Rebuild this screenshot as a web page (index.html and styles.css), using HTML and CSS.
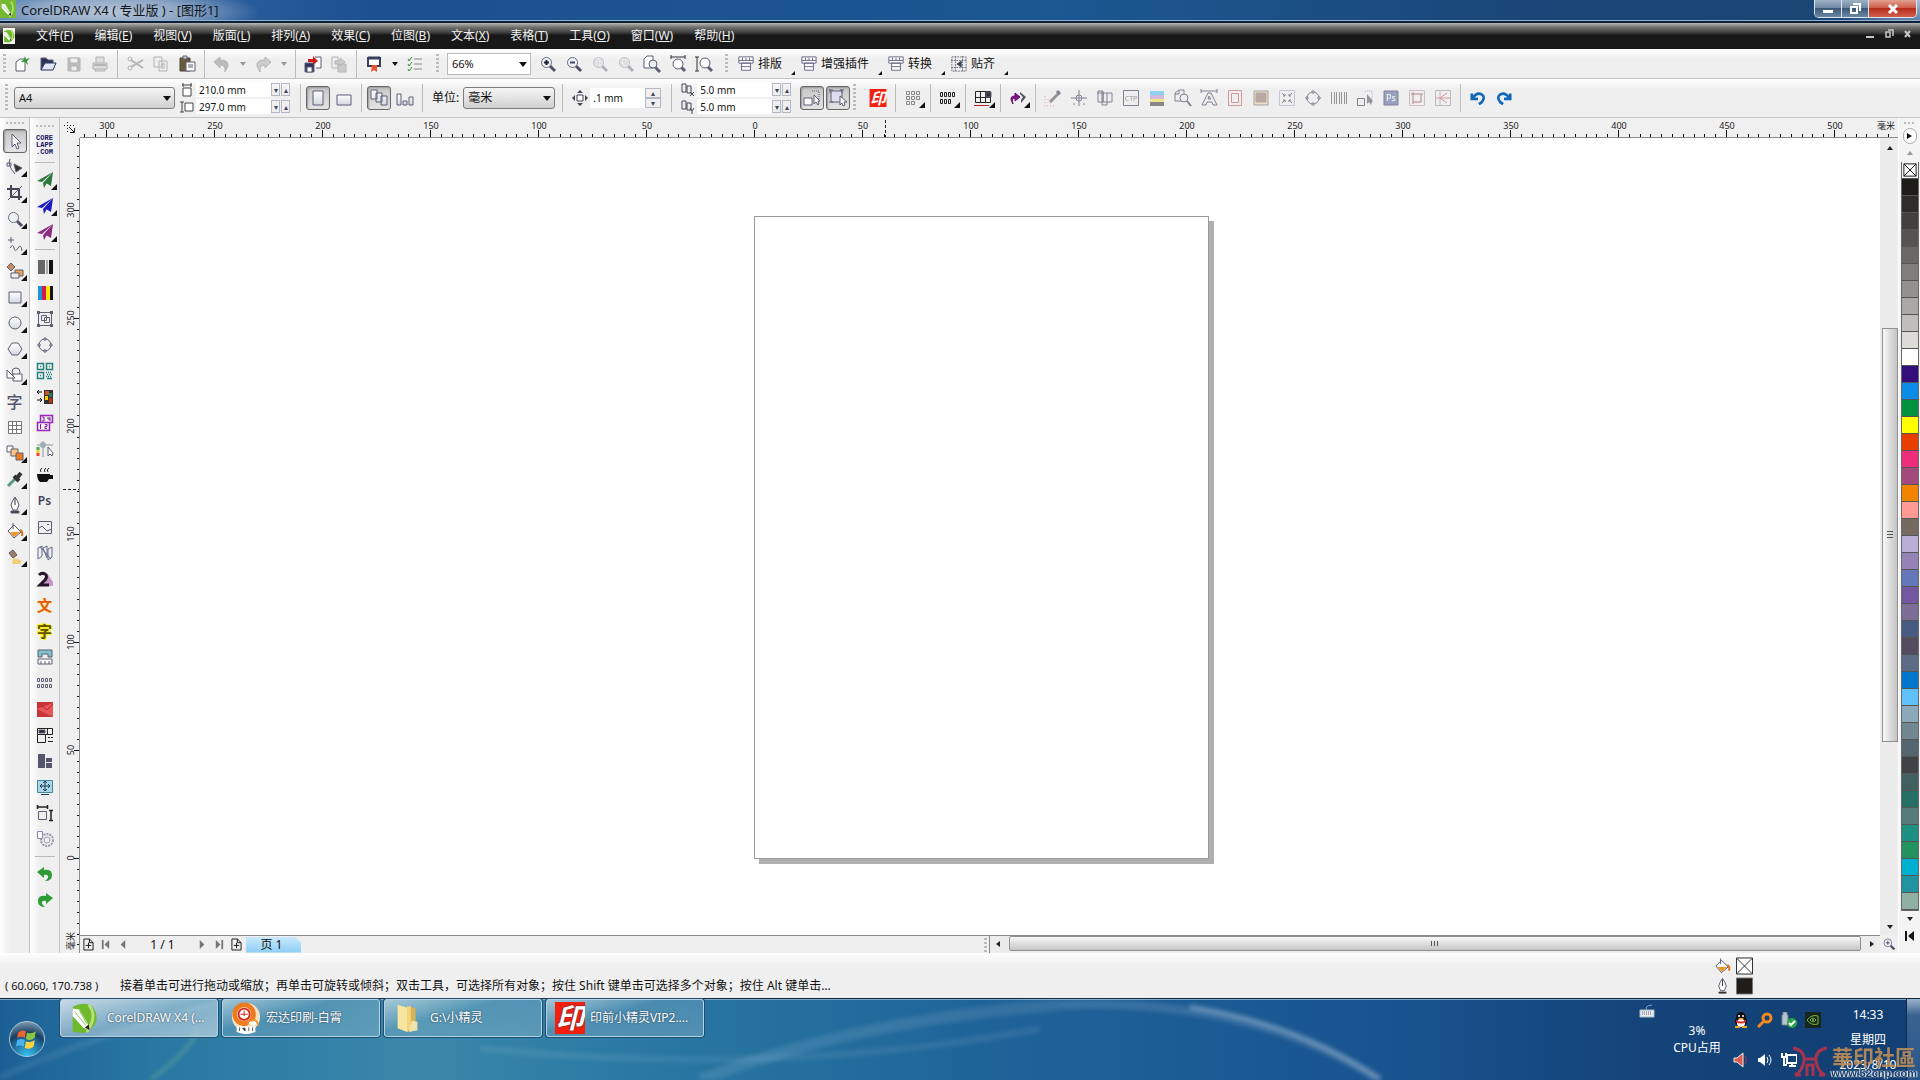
FILE: index.html
```html
<!DOCTYPE html>
<html lang="zh-CN">
<head>
<meta charset="utf-8">
<title>CorelDRAW X4</title>
<link rel="stylesheet" href="styles.css">
</head>
<body>
<svg class="defs" aria-hidden="true">
  <defs>
    <linearGradient id="face" x1="0" y1="0" x2="0" y2="1"><stop offset="0" stop-color="#fff"/><stop offset="1" stop-color="#d5d8e2"/></linearGradient>
    <pattern id="hticks" patternUnits="userSpaceOnUse" x="26" y="0" width="108" height="20"><path d="M.5 12v7M11.5 16v3M22.5 16v3M32.5 16v3M43.5 16v3M54.5 16v3M65.5 16v3M76.5 16v3M86.5 16v3M97.5 16v3" stroke="#111"/></pattern>
    <pattern id="vticks" patternUnits="userSpaceOnUse" x="0" y="72" width="20" height="108"><path d="M14 .5h6M17 11.5h2M17 22.5h2M17 32.5h2M17 43.5h2M17 54.5h2M17 65.5h2M17 76.5h2M17 86.5h2M17 97.5h2" stroke="#111"/></pattern>
  </defs>
  <symbol id="corel" viewBox="0 0 30 34"><path d="M3 5Q14-1 23 4q7 8 5 17-4 9-13 12L3 32z" fill="#6fb92c" stroke="none"/><path d="M20 3q10 12-2 29" fill="none" stroke="#b9e07d" stroke-width="3"/><path d="M3 7l7 1 9 15 2 7-7-3L3 15z" fill="#fff"/><path d="M5 10l12 15M10 9l8 14" stroke="#89bd57"/><path d="M16 27l5 3-1-6z" fill="#222"/></symbol>
  <symbol id="lens" viewBox="0 0 18 18"><path d="M11 11l5 5" stroke="#52536a" stroke-width="3"/><circle cx="7.500" cy="7.500" r="5" fill="#eef1f8" stroke="#6a6c80"/></symbol>
  <symbol id="plane" viewBox="0 0 18 18"><path d="M17 1L1 10l5 1zM17 1L7 12l1 5zM17 1l-7 11 5 3z" stroke="none"/></symbol>
  <symbol id="panel" viewBox="0 0 18 18"><path d="M1 1h16v7H1zM4 8h10v8H4zM4 12h10M1 5h16M5 2v3M9 2v3M13 2v3" fill="#fff" stroke="#5d5d80"/></symbol>
  <symbol id="seal" viewBox="0 0 30 32"><path d="M0 0h30v32H0z" fill="#f3200f" stroke="none"/><text x="15" y="26" text-anchor="middle" class="sealmark">印</text></symbol>
  <symbol id="bucket" viewBox="0 0 18 18"><path d="M2 9l6-6 7 7-7 6z" fill="#fff" stroke="#555670"/><path d="M4 10h10l-6 5z" fill="#f09426" stroke="none"/><path d="M7 1v6" stroke="#555670"/><path d="M14 8q3 1 2 6" fill="none" stroke="#d67418" stroke-width="2"/></symbol>
  <symbol id="nib" viewBox="0 0 18 18"><path d="M9 1Q6 5 5 9l2 5h4l2-5Q12 5 9 1z" fill="#fff" stroke="#55566a"/><path d="M9 2v7M5 16h8" stroke="#333"/><path d="M5 15h8v2H5z" fill="#333"/></symbol>
  <symbol id="addpage" viewBox="0 0 12 14"><path d="M1 1h6l4 4v8H1zM6 5v6M3 8h6M7 1v4h4" fill="none" stroke="#111"/></symbol>
  <symbol id="curl" viewBox="0 0 18 18"><path d="M1 7l7-5v3q8-1 8 5t-7 6q4-3 3-5t-4-1v3z" stroke="none"/></symbol>
  <symbol id="turn" viewBox="0 0 18 18"><path d="M2 4v6h7M3 9q5-7 10-4t0 9l-3 2" fill="none" stroke-width="3"/></symbol>
</svg>

<header class="titlebar">
  <svg class="logo"><use href="#corel"/></svg>
  <h1>CorelDRAW X4 ( 专业版 ) - [图形1]</h1>
  <div class="wincontrols">
    <button aria-label="最小化"><svg viewBox="0 0 14 12"><path d="M2 7h10v3H2z" fill="#fff"/></svg></button>
    <button aria-label="还原"><svg viewBox="0 0 14 12"><path d="M5 1h7v7M3 4h6v6H3z" fill="none" stroke="#fff" stroke-width="2"/></svg></button>
    <button class="close" aria-label="关闭"><svg viewBox="0 0 14 12"><path d="M3 2l8 8M11 2l-8 8" stroke="#fff" stroke-width="3"/></svg></button>
  </div>
</header>

<nav class="menubar">
  <svg class="docicon"><use href="#corel"/></svg>
  <button>文件(<u>F</u>)</button><button>编辑(<u>E</u>)</button><button>视图(<u>V</u>)</button><button>版面(<u>L</u>)</button><button>排列(<u>A</u>)</button><button>效果(<u>C</u>)</button><button>位图(<u>B</u>)</button><button>文本(<u>X</u>)</button><button>表格(<u>T</u>)</button><button>工具(<u>O</u>)</button><button>窗口(<u>W</u>)</button><button>帮助(<u>H</u>)</button>
  <svg class="doccontrols" viewBox="0 0 46 12"><path d="M0 8h8v2H0z" fill="#c8c8c8"/><path d="M22 2h5v6M20 4h4v5h-4z" fill="none" stroke="#c8c8c8" stroke-width="1.500"/><path d="M39 3l5 6M44 3l-5 6" stroke="#c8c8c8" stroke-width="2"/></svg>
</nav>

<div class="toolbar standard">
  <i class="grip"></i>
  <button class="tool" aria-label="新建"><svg viewBox="0 0 18 18"><path d="M3 7l4-3h5v12H3z" fill="#fff"/><path d="M12 1l1 3 4-1-3 3 1 4-3-3-4 0 3-3z" fill="#3a9a3a" stroke="none"/></svg></button>
  <button class="tool" aria-label="打开"><svg viewBox="0 0 18 18"><path d="M2 15V3h5l2 2h5v3H6z" fill="#2d3358"/><path d="M6 8h11l-3 7H2z" fill="#dfe6f5" stroke="#2d3358"/></svg></button>
  <button class="tool off" aria-label="保存"><svg viewBox="0 0 18 18"><path d="M3 3h12v13H3z" fill="#bbb"/><path d="M5 3h8v5H5zM6 11h6v5H6z" fill="#eee"/></svg></button>
  <button class="tool off" aria-label="打印"><svg viewBox="0 0 18 18"><path d="M5 8V2h8v6M2 8h14v6H2zM4 14v2h10v-2" fill="#ddd"/><path d="M3 10h12" stroke-width="2"/></svg></button>
  <i class="sep"></i>
  <button class="tool off" aria-label="剪切"><svg viewBox="0 0 18 18"><path d="M5 5l12 8M5 12l12-7" stroke-width="2"/><circle cx="4" cy="4" r="2"/><circle cx="4" cy="13" r="2"/></svg></button>
  <button class="tool off" aria-label="复制"><svg viewBox="0 0 18 18"><path d="M2 2h8v10H2zM7 6h8v10H7zM9 9h4M9 11h4M9 13h4" fill="#eee"/></svg></button>
  <button class="tool" aria-label="粘贴"><svg viewBox="0 0 18 18"><path d="M2 3h10v13H2z" fill="#6a5a3c" stroke="#4a4538"/><path d="M5 1h4v3H5z" fill="#ccc"/><path d="M8 7h9v9H8zM10 10h5M10 12h5" fill="#fff"/></svg></button>
  <i class="sep"></i>
  <button class="tool off" aria-label="撤消"><svg viewBox="0 0 18 18"><path d="M1 7l6-5v3q9 0 8 6l-3 6q1-7-5-7v3z" fill="#bbb"/></svg></button><button class="drop off" aria-label="撤消列表"></button>
  <button class="tool off" aria-label="重做"><svg viewBox="0 0 18 18"><path d="M17 7l-6-5v3q-9 0-8 6l3 6q-1-7 5-7v3z" fill="#ccc"/></svg></button><button class="drop off" aria-label="重做列表"></button>
  <i class="sep"></i>
  <button class="tool" aria-label="导入"><svg viewBox="0 0 18 18"><path d="M11 2h6v11h-5" fill="#fff"/><path d="M1 8h9v9H1z" fill="#2c3260"/><path d="M3 12h5v5H3z" fill="#fff"/><path d="M4 4h5V1l5 5-5 4V7H4z" fill="#d01c1c" stroke="none"/></svg></button>
  <button class="tool off" aria-label="导出"><svg viewBox="0 0 18 18"><path d="M2 2h6v11H2z" fill="#eee"/><path d="M8 9h8v8H8z" fill="#ccc"/><path d="M5 6h5V3l5 4-5 4V9H5z" fill="#ccc"/></svg></button>
  <i class="sep"></i>
  <button class="tool" aria-label="应用程序启动器"><svg viewBox="0 0 18 18"><path d="M3 3h12v8H3z" fill="#fff" stroke="#39405f" stroke-width="2"/><path d="M3 3h12" stroke="#39405f" stroke-width="3"/><path d="M7 10h5v7l-3-2-3 2z" fill="#e8542d" stroke="none"/></svg></button><button class="drop" aria-label="启动器列表"></button>
  <button class="tool" aria-label="选项"><svg viewBox="0 0 18 18"><path d="M8 4h8M8 9h8M8 14h8" stroke="#888"/><path d="M2 4l1 2 3-4M2 9l1 2 3-4M2 14l1 2 3-4" stroke="#3b8a3b"/></svg></button>
  <i class="grip late"></i>
  <span class="combo zoomlevel"><select aria-label="缩放级别"><option>66%</option></select></span>
  <button class="tool" aria-label="放大"><svg viewBox="0 0 18 18"><use href="#lens"/><path d="M5 7.500h5M7.500 5v5" stroke="#223" stroke-width="2"/></svg></button>
  <button class="tool" aria-label="缩小"><svg viewBox="0 0 18 18"><use href="#lens"/><path d="M5 7.500h5" stroke="#447" stroke-width="2"/></svg></button>
  <button class="tool off dim" aria-label="缩放选定"><svg viewBox="0 0 18 18"><use href="#lens"/><path d="M4 5h7v6H4zM4 8h7M7 4v7"/></svg></button>
  <button class="tool off dim" aria-label="缩放全部"><svg viewBox="0 0 18 18"><use href="#lens"/><path d="M4 6h5v4H4zM7 4h4v4H7z"/></svg></button>
  <button class="tool" aria-label="缩放页面"><svg viewBox="0 0 18 18"><path d="M1 4l3-3h6v12H1z" fill="#fff"/><path d="M12 12l5 5" stroke-width="3"/><circle cx="10" cy="9" r="4" fill="#e8ecf4"/></svg></button>
  <button class="tool" aria-label="按宽度"><svg viewBox="0 0 18 18"><path d="M2 2h14M2 0v4M16 0v4" stroke="#333"/><path d="M12 12l4 4" stroke-width="3"/><circle cx="9" cy="9" r="5" fill="#fff"/></svg></button>
  <button class="tool" aria-label="按高度"><svg viewBox="0 0 18 18"><path d="M2 2v14M0 2h4M0 16h4" stroke="#333"/><path d="M13 12l4 4" stroke-width="3"/><circle cx="10" cy="8" r="5" fill="#fff"/></svg></button>
  <i class="grip late"></i>
  <button class="texttool"><svg><use href="#panel"/></svg>排版</button>
  <button class="texttool"><svg><use href="#panel"/></svg>增强插件</button>
  <button class="texttool"><svg><use href="#panel"/></svg>转换</button>
  <button class="texttool"><svg viewBox="0 0 18 18"><path d="M1 1h16v16H1zM5 0v18M13 0v18M0 5h18M0 13h18" fill="none" stroke="#667" stroke-dasharray="2 1"/><path d="M12 5v8L6 9z" fill="#345"/></svg>贴齐</button>
</div>

<div class="toolbar property">
  <i class="grip"></i>
  <span class="combo raised paper"><select aria-label="纸张类型"><option>A4</option></select></span>
  <div class="pair">
    <label><svg viewBox="0 0 14 14"><path d="M3 5h8v8H3zM2 2h10M3 0v4M11 0v4" fill="#fff" stroke="#444"/></svg><input aria-label="宽度" value="210.0 mm"><span class="spin"><button aria-label="减小">▾</button><button aria-label="增大">▴</button></span></label>
    <label><svg viewBox="0 0 14 14"><path d="M5 3h8v8H5zM2 2v10M0 2h4M0 12h4" fill="#fff" stroke="#444"/></svg><input aria-label="高度" value="297.0 mm"><span class="spin"><button aria-label="减小">▾</button><button aria-label="增大">▴</button></span></label>
  </div>
  <i class="sep"></i>
  <button class="tool on" aria-label="纵向"><svg viewBox="0 0 18 18"><path d="M4 2h10v14H4z" fill="url(#face)"/></svg></button>
  <button class="tool" aria-label="横向"><svg viewBox="0 0 18 18"><path d="M2 6h14v10H2z" fill="url(#face)"/></svg></button>
  <i class="sep"></i>
  <button class="tool on" aria-label="全部页面"><svg viewBox="0 0 18 18"><path d="M1 1h6v9H1zM6 4h6v9H6zM11 7h6v9h-6z" fill="url(#face)"/></svg></button>
  <button class="tool" aria-label="当前页面"><svg viewBox="0 0 18 18"><path d="M1 5h4v11H1zM7 12h4v4H7zM13 8h4v8h-4z" fill="url(#face)"/></svg></button>
  <i class="sep"></i>
  <label class="units">单位: <span class="combo raised"><select><option>毫米</option></select></span></label>
  <i class="sep"></i>
  <label class="nudge"><svg viewBox="0 0 16 16"><path d="M5 5h6v6H5z" fill="#fff" stroke="#445"/><path d="M8 0l3 3H5zM8 16l3-3H5zM0 8l3-3v6zM16 8l-3-3v6z" fill="#445"/></svg><input aria-label="微调偏移" value=".1 mm"><span class="spin tall"><button aria-label="增大">▴</button><button aria-label="减小">▾</button></span></label>
  <i class="sep"></i>
  <div class="pair dup">
    <label><svg viewBox="0 0 14 14"><path d="M1 1h4v8H1zM6 3h4v7H6zM9 9l4 4M13 9l-4 4" fill="none" stroke="#445"/></svg><input aria-label="再制距离 X" value="5.0 mm"><span class="spin"><button aria-label="减小">▾</button><button aria-label="增大">▴</button></span></label>
    <label><svg viewBox="0 0 14 14"><path d="M1 1h4v8H1zM6 3h4v7H6zM9 8l2 3 2-3M11 11v3" fill="none" stroke="#445"/></svg><input aria-label="再制距离 Y" value="5.0 mm"><span class="spin"><button aria-label="减小">▾</button><button aria-label="增大">▴</button></span></label>
  </div>
  <button class="tool on" aria-label="移动时"><svg viewBox="0 0 18 18"><path d="M1 9h8v7H1z" fill="#fff"/><path d="M9 2h7v8" stroke-dasharray="1 1"/><path d="M11 6v9l2-2 2 3 1-1-1-3h2z" fill="#fff"/></svg></button>
  <button class="tool on" aria-label="视为已填充"><svg viewBox="0 0 18 18"><path d="M2 2h11v11H2zM0 1h4M11 1h4M0 13h4M1 0v4M13 0v4" fill="#dde"/><path d="M11 7v9l2-2 1 3 2-1-1-3h3z" fill="#fff"/></svg></button>
  <i class="grip"></i>
  <button class="tool wide" aria-label="印前小精灵"><svg><use href="#seal"/></svg></button>
  <i class="sep"></i>
  <button class="tool fly" aria-label="阵列"><svg viewBox="0 0 18 18"><path d="M2.500 2.500h3v3h-3zM7.500 2.500h3v3h-3zM12.500 2.500h3v3h-3zM2.500 7.500h3v3h-3zM7.500 7.500h3v3h-3zM12.500 7.500h3v3h-3zM2.500 12.500h3v3h-3zM7.500 12.500h3v3h-3z" stroke="#888"/></svg></button>
  <i class="sep"></i>
  <button class="tool fly" aria-label="拼版"><svg viewBox="0 0 18 18"><path d="M1.500 3.500h2v4h-2zM5.500 3.500h2v4h-2zM9.500 3.500h2v4h-2zM13.500 3.500h2v4h-2zM1.500 10.500h2v4h-2zM5.500 10.500h2v4h-2zM9.500 10.500h2v4h-2z" stroke="#222"/></svg></button>
  <i class="sep"></i>
  <button class="tool fly" aria-label="裁切"><svg viewBox="0 0 18 18"><path d="M1.500 2.500h15v11h-15zM1 8.500h16M6.500 2v12M11.500 2v12" stroke="#222"/><path d="M12 3h5v5h-5z" fill="#333"/><path d="M0 16.500h15" stroke="#b22"/></svg></button>
  <i class="sep"></i>
  <button class="tool fly" aria-label="转曲"><svg viewBox="0 0 18 18"><path d="M4 15Q-1 7 6 7V4l5 4-5 4V9q-4 0-2 6z" fill="#83138a" stroke="#600f67"/><path d="M11 3l6 5-5 6v-3l2-3-3-3z" fill="#554c66" stroke="none"/></svg></button>
  <i class="sep"></i>
  <div class="plugins">
  <button class="tool" aria-label="取色"><svg viewBox="0 0 18 18"><path d="M6 13L15 4" stroke="#777" stroke-width="3"/><path d="M13 2l3 3" stroke-width="3"/><path d="M1 7v10h10M4 10v4h4" stroke="#e88" stroke-dasharray="1 2"/></svg></button>
  <button class="tool" aria-label="定位"><svg viewBox="0 0 18 18"><path d="M9 1v16M1 9h16M3 15h2M13 15h2"/><circle cx="9" cy="9" r="3"/></svg></button>
  <button class="tool" aria-label="出血"><svg viewBox="0 0 18 18"><path d="M2 2h5v11H2zM7 4h9v9H7zM6 2v14h5V4M1 4h6"/></svg></button>
  <button class="tool" aria-label="CTP"><svg viewBox="0 0 18 18"><path d="M1.500 1.500h15v15h-15z"/><text x="9" y="12" text-anchor="middle">CTP</text></svg></button>
  <button class="tool" aria-label="色条"><svg viewBox="0 0 18 18"><g stroke="none"><path d="M2 2h14v4H2z" fill="#71c9ee"/><path d="M2 6h14v4H2z" fill="#c8a8dc"/><path d="M2 10h14v3H2z" fill="#ece26a"/><path d="M2 13h14v4H2z" fill="#666"/></g></svg></button>
  <button class="tool" aria-label="查找"><svg viewBox="0 0 18 18"><path d="M1 4l4-3h5v11H1zM5 1v4H1"/><circle cx="10" cy="9" r="4" fill="#eee"/><path d="M13 12l4 5" stroke-width="2"/></svg></button>
  <button class="tool" aria-label="文字"><svg viewBox="0 0 18 18"><path d="M2 16L8 4h3l6 12h-4l-1-3H7l-1 3zM8 10h3L9 7zM1 2h16M1 0v4M17 0v4"/></svg></button>
  <button class="tool" aria-label="边框"><svg viewBox="0 0 18 18"><path d="M2.500 1.500h13v15h-13zM5.500 4.500h7v9h-7z" stroke="#c67b7b"/></svg></button>
  <button class="tool" aria-label="填色"><svg viewBox="0 0 18 18"><path d="M2 2h14v14H2z" fill="#f6d8b9" stroke="#888"/><path d="M4 4h10v9H4z" fill="#a88f8b" stroke="#998"/></svg></button>
  <button class="tool" aria-label="缩小至"><svg viewBox="0 0 18 18"><path d="M1.500 1.500h15v15h-15z" stroke="#b7b9d0"/><path d="M4 4l3 3M14 4l-3 3M4 14l3-3M14 14l-3-3M7 5v2H5M11 5v2h2M7 13v-2H5M11 13v-2h2"/></svg></button>
  <button class="tool" aria-label="圆形节点"><svg viewBox="0 0 18 18"><circle cx="9" cy="9" r="6"/><path d="M8 2h2v2H8zM8 14h2v2H8zM2 8h2v2H2zM14 8h2v2h-2z" fill="#eee"/></svg></button>
  <button class="tool" aria-label="条码"><svg viewBox="0 0 18 18"><path d="M1.500 3v12M4.500 3v12M6.500 3v12M9.500 3v12M11.500 3v12M14.500 3v12M16.500 3v12" stroke="#777"/></svg></button>
  <button class="tool" aria-label="选取"><svg viewBox="0 0 18 18"><path d="M1.500 9.500h7v7h-7z"/><path d="M9 2h7v8" stroke="#8ba5d6" stroke-dasharray="1 1"/><path d="M11 5v10l2-2 2 3 1-3 1-1z" fill="#777" stroke="none"/></svg></button>
  <button class="tool" aria-label="Photoshop"><svg viewBox="0 0 18 18"><path d="M2 2h14v14H2z" fill="#7d87af"/><text class="light" x="9" y="12" text-anchor="middle">Ps</text></svg></button>
  <button class="tool" aria-label="裁切框"><svg viewBox="0 0 18 18"><path d="M1.500 1.500h15v15h-15z" stroke="#c5acba"/><path d="M5 5h8v8H5zM3 5h2M13 5h2M5 3v2M5 13v2" stroke="#a85f68"/></svg></button>
  <button class="tool" aria-label="角线"><svg viewBox="0 0 18 18"><path d="M1.500 1.500h15v15h-15zM6 1v16" stroke="#aaa"/><path d="M2 9h14M6 9l7 5M6 9l7-5" stroke="#d87780"/></svg></button>
  </div>
  <i class="sep"></i>
  <button class="tool blue" aria-label="撤消"><svg><use href="#turn"/></svg></button>
  <button class="tool blue flip" aria-label="重做"><svg><use href="#turn"/></svg></button>
</div>

<main class="workspace">
  <aside class="toolbox first">
    <i class="vgrip"></i>
    <button class="tool on" aria-label="挑选"><svg viewBox="0 0 18 18"><path d="M6 2v13l3-3 2 5 2-1-2-5h4z" fill="#fff"/></svg></button>
    <button class="tool fly" aria-label="形状"><svg viewBox="0 0 18 18"><path d="M4 1q-3 6 5 15M1 5h4v3H1z"/><path d="M8 6l8 4-6 4z" fill="#333"/></svg></button>
    <button class="tool fly" aria-label="裁剪"><svg viewBox="0 0 18 18"><path d="M5 1v12h11M1 5h12v11" stroke="#445" stroke-width="2"/><path d="M2 16L16 2"/></svg></button>
    <button class="tool fly" aria-label="缩放"><svg viewBox="0 0 18 18"><use href="#lens"/></svg></button>
    <button class="tool fly" aria-label="手绘"><svg viewBox="0 0 18 18"><path d="M5 1v6M2 4h6M4 12q3-5 4 0t4 0 4 3"/></svg></button>
    <button class="tool fly" aria-label="智能填充"><svg viewBox="0 0 18 18"><path d="M1 5l4-4 4 4-4 4z" fill="#c98d65"/><path d="M9 8h8v6H9z" fill="#eaa74f"/><path d="M5 11h8v5H5z" fill="#eee"/></svg></button>
    <button class="tool fly" aria-label="矩形"><svg viewBox="0 0 18 18"><path d="M3 4h12v11H3z" fill="url(#face)"/></svg></button>
    <button class="tool fly" aria-label="椭圆形"><svg viewBox="0 0 18 18"><circle cx="9" cy="9" r="6" fill="url(#face)"/></svg></button>
    <button class="tool fly" aria-label="多边形"><svg viewBox="0 0 18 18"><path d="M6 3h6l4 6-4 6H6L2 9z" fill="url(#face)"/></svg></button>
    <button class="tool fly" aria-label="基本形状"><svg viewBox="0 0 18 18"><circle cx="10" cy="6" r="4"/><path d="M7 8h9v7H7z" fill="#fff"/><path d="M1 4v8h8z" fill="#fff"/></svg></button>
    <button class="tool glyph" aria-label="文本">字</button>
    <button class="tool" aria-label="表格"><svg viewBox="0 0 18 18"><path d="M2.500 3.500h13v12h-13zM2 7.500h14M2 11.500h14M6.500 3v12M10.500 3v12" fill="#fff" stroke="#777"/></svg></button>
    <button class="tool fly" aria-label="交互式调和"><svg viewBox="0 0 18 18"><path d="M1 2h6v6H1z" fill="#fff"/><path d="M5 5h7v7H5z" fill="#f9c982"/><path d="M10 9h7v7h-7z" fill="#ef7c22"/></svg></button>
    <button class="tool fly" aria-label="滴管"><svg viewBox="0 0 18 18"><path d="M2 16L11 7" stroke="#5a9a81" stroke-width="3"/><path d="M8 6l5 5M11 8l4-5" stroke="#333" stroke-width="4"/></svg></button>
    <button class="tool fly" aria-label="轮廓"><svg><use href="#nib"/></svg></button>
    <button class="tool fly" aria-label="填充"><svg><use href="#bucket"/></svg></button>
    <button class="tool fly" aria-label="交互式填充"><svg viewBox="0 0 18 18"><path d="M3 5l4-3 4 5-4 3z" fill="#99816e" stroke="#655"/><path d="M7 10l8 2v4H6z" fill="#f4cd79" stroke="none"/></svg></button>
  </aside>
  <aside class="toolbox second">
    <i class="vgrip"></i>
    <a class="brand" href="#">CORE<br>LAPP<br>.COM</a>
    <i class="hsep"></i>
    <button class="tool fly green" aria-label="发送一"><svg><use href="#plane"/></svg></button>
    <button class="tool fly navy" aria-label="发送二"><svg><use href="#plane"/></svg></button>
    <button class="tool fly plum" aria-label="发送三"><svg><use href="#plane"/></svg></button>
    <i class="hsep"></i>
    <button class="tool" aria-label="灰度"><svg viewBox="0 0 18 18"><g stroke="none"><path d="M2 2h7v14H2z" fill="#666"/><path d="M10 2h2v14h-2z" fill="#aaa"/><path d="M13 2h4v14h-4z" fill="#111"/></g></svg></button>
    <button class="tool" aria-label="四色"><svg viewBox="0 0 18 18"><g stroke="none"><path d="M2 2h4v14H2z" fill="#1b96d1"/><path d="M6 2h4v14H6z" fill="#d51757"/><path d="M10 2h4v14h-4z" fill="#fce800"/><path d="M14 2h3v14h-3z" fill="#151515"/></g></svg></button>
    <button class="tool" aria-label="群组"><svg viewBox="0 0 18 18"><path d="M2.500 2.500h13v13h-13zM5.500 5.500h5v5h-5zM8.500 7.500h5v5h-5z"/><path d="M1 1h3v3H1zM14 1h3v3h-3zM1 14h3v3H1zM14 14h3v3h-3z" fill="#5c5e74" stroke="none"/></svg></button>
    <button class="tool" aria-label="节点"><svg viewBox="0 0 18 18"><circle cx="9" cy="9" r="6"/><path d="M8 2h2v2H8zM8 14h2v2H8zM2 8h2v2H2zM14 8h2v2h-2z" fill="#fff"/></svg></button>
    <button class="tool" aria-label="二维码"><svg viewBox="0 0 18 18"><path d="M1.500 1.500h6v6h-6zM10.500 1.500h6v6h-6zM1.500 10.500h6v6h-6zM4 4.500h1M13 4.500h1M4 13.500h1M10 10.500h1M12 10.500h1M14 10.500h1M11 12.500h1M13 12.500h1M15 12.500h1M10 14.500h1M12 14.500h1M14 14.500h1M11 16.500h5" stroke="#23817d" stroke-width="1.500"/></svg></button>
    <button class="tool" aria-label="颜色替换"><svg viewBox="0 0 18 18"><g stroke="none"><path d="M8 2h9v14H8z" fill="#333"/><path d="M9 3h4v4H9z" fill="#c52"/><path d="M9 8h3v4H9z" fill="#fc0"/><path d="M13 5h3v4h-3z" fill="#276"/><path d="M13 10h3v5h-3z" fill="#b31"/></g><path d="M6 4H1l2-2M1 4l2 2M1 12h5l-2-2M6 12l-2 2" stroke="#111"/></svg></button>
    <button class="tool" aria-label="编号"><svg viewBox="0 0 18 18"><path d="M4.500 1.500h12v7h-12zM1.500 8.500h12v8h-12z" stroke="#9824bb" stroke-width="1.500"/><path d="M6 3h2v4H6M12 3v2h2M14 3v4M4.500 10v5M9 10.500h2v2H9v2h2" stroke="#82189f"/></svg></button>
    <button class="tool" aria-label="对齐"><svg viewBox="0 0 18 18"><path d="M7 1v16M1 5h16M5 3h4v4H5z" stroke="#8996a0"/><path d="M2 7v3" stroke="#4a4" stroke-width="3"/><path d="M2 10v3" stroke="#fc2" stroke-width="3"/><path d="M2 13v3" stroke="#e43" stroke-width="3"/><path d="M12 7v9l2-2 2 2 1-3z" fill="#fff"/></svg></button>
    <button class="tool" aria-label="休息"><svg viewBox="0 0 18 18"><path d="M1 8h13v1h3v4h-4l-2 3H4q-3-3-3-8z" fill="#111" stroke="none"/><path d="M5 6q-2-2 1-4M9 6q-2-2 1-4M12 6q-2-2 1-4" stroke="#222"/></svg></button>
    <button class="tool ps" aria-label="Photoshop">Ps</button>
    <button class="tool" aria-label="图像"><svg viewBox="0 0 18 18"><path d="M2.500 3.500h13v12h-13zM2 11l4-3 5 5 5-2M11 6.500h2"/></svg></button>
    <button class="tool" aria-label="镜像"><svg viewBox="0 0 18 18"><path d="M2 4v11l4-3V2zM7 4l4 10V2zM12 5v11l4-3V3zM4 3l11 12" stroke="#656a8d"/></svg></button>
    <button class="tool" aria-label="二次"><svg viewBox="0 0 18 18"><path d="M11 3l6 9v4H8z" fill="#c995c6" stroke="none"/><path d="M3 5q3-3 6-1t0 6l-5 5h9" stroke="#241528" stroke-width="3"/></svg></button>
    <button class="tool glyph wen" aria-label="文字">文</button>
    <button class="tool glyph zi" aria-label="字体">字</button>
    <button class="tool" aria-label="标尺"><svg viewBox="0 0 18 18"><path d="M2 2h14v7h-4V6H6v3H2z" fill="#7fc4ca"/><path d="M2 11h14v5H2zM5 13v3M9 13v3M13 13v3" fill="#fff"/></svg></button>
    <button class="tool" aria-label="阵列"><svg viewBox="0 0 18 18"><path d="M1.500 4.500h2v3h-2zM5.500 4.500h2v3h-2zM9.500 4.500h2v3h-2zM13.500 4.500h2v3h-2zM1.500 10.500h2v3h-2zM5.500 10.500h2v3h-2zM9.500 10.500h2v3h-2zM13.500 10.500h2v3h-2z"/></svg></button>
    <button class="tool" aria-label="信封"><svg viewBox="0 0 18 18"><path d="M1 2h16v15H1z" fill="#c9343c" stroke="none"/><path d="M1 9l16-6v14z" fill="#e65858" stroke="none"/><path d="M6 6l5 4 6-6" stroke="#b22a32"/></svg></button>
    <button class="tool" aria-label="版式"><svg viewBox="0 0 18 18"><path d="M1.500 2.500h15v6h-15zM1.500 8.500v8h8v-8M11.500 2v6M12 11.500h2M15 11.500h2M12 15.500h5" stroke="#222"/><path d="M3 4h6v3H3z" fill="#222"/></svg></button>
    <button class="tool" aria-label="布局"><svg viewBox="0 0 18 18"><path d="M2 2h7v14H2zM10 6h6v4h-6zM10 11h6v5h-6z" fill="#55566e" stroke="none"/></svg></button>
    <button class="tool" aria-label="适合页面"><svg viewBox="0 0 18 18"><path d="M1.500 2.500h15v12h-15z" fill="#a9d8e7" stroke="#4488a2"/><path d="M9 4v8M4 8h10M7 5l2-2 2 2M7 11l2 2 2-2M6 6L4 8l2 2M12 6l2 2-2 2M5 16.500h8" stroke="#223e52"/></svg></button>
    <button class="tool" aria-label="尺寸"><svg viewBox="0 0 18 18"><path d="M2.500 7.500h8v8h-8z"/><path d="M1 3h11M1.500 1v4M11.500 1v4M15 6v11M13 6.500h4M13 16.500h4" stroke="#222" stroke-width="1.500"/></svg></button>
    <button class="tool" aria-label="设置"><svg viewBox="0 0 18 18"><circle cx="11" cy="10" r="6" stroke-width="2" stroke-dasharray="2 1" stroke="#99a"/><circle cx="11" cy="10" r="3" stroke="#99a"/><path d="M1.500 1.500h5v7h-5z" fill="#fff" stroke="#88a"/></svg></button>
    <i class="hsep"></i>
    <button class="tool leaf" aria-label="后退"><svg><use href="#curl"/></svg></button>
    <button class="tool leaf flip" aria-label="前进"><svg><use href="#curl"/></svg></button>
  </aside>

  <section class="editor">
    <div class="corner"><svg viewBox="0 0 12 12"><path d="M3.500 0v12M0 3.500h12" stroke="#222" stroke-dasharray="1 2"/><path d="M5 5l5 5M10.500 6v4.500H6" fill="none" stroke="#222"/></svg></div>
    <svg class="ruler horizontal" id="hruler"><rect width="100%" height="20" fill="url(#hticks)"/><path d="M805.500 2v18" stroke="#222" stroke-dasharray="3 2"/><text x="100%" dx="-21" y="11" class="unit">毫米</text></svg>
    <svg class="ruler vertical" id="vruler"><rect width="20" height="100%" fill="url(#vticks)"/><path d="M3 351.500h16" stroke="#222" stroke-dasharray="3 2"/><text class="unit" transform="translate(14 812) rotate(-90)">毫米</text></svg>
    <div class="canvas"><div class="page"></div></div>
    <div class="scroll vscroll">
      <button class="arrow up" aria-label="向上"></button>
      <div class="track"><div class="thumb"></div></div>
      <button class="arrow down" aria-label="向下"></button>
    </div>
    <div class="bottombar">
      <div class="pages">
        <button aria-label="加页"><svg><use href="#addpage"/></svg></button>
        <button aria-label="首页"><svg viewBox="0 0 12 14"><path d="M3 2v10" stroke="#777" stroke-width="2"/><path d="M10 2v10L5 7z" fill="#777"/></svg></button>
        <button aria-label="上一页"><svg viewBox="0 0 12 14"><path d="M9 2v10L4 7z" fill="#777"/></svg></button>
        <span class="count">1 / 1</span>
        <button aria-label="下一页"><svg viewBox="0 0 12 14"><path d="M3 2v10l5-5z" fill="#777"/></svg></button>
        <button aria-label="末页"><svg viewBox="0 0 12 14"><path d="M9 2v10" stroke="#777" stroke-width="2"/><path d="M2 2v10l5-5z" fill="#777"/></svg></button>
        <button aria-label="加页"><svg><use href="#addpage"/></svg></button>
        <button class="tab">页 1</button>
      </div>
      <i class="grip"></i>
      <div class="scroll hscroll">
        <button class="arrow left" aria-label="向左"></button>
        <div class="thumb"></div>
        <button class="arrow right" aria-label="向右"></button>
      </div>
    </div>
    <button class="navigator" aria-label="导航器"><svg viewBox="0 0 18 18"><use href="#lens"/><path d="M5 7.500h5M7.500 5v5" stroke="#334"/></svg></button>
  </section>

  <aside class="palette">
    <i class="vgrip"></i>
    <button class="play" aria-label="调色板菜单"></button>
    <button class="arrow up pale" aria-label="向上"></button>
    <div class="swatches" id="swatches"><button class="none" aria-label="无填充"><svg viewBox="0 0 17 17"><path d="M2 2h13v13H2zM2 2l13 13M15 2L2 15" fill="#fff" stroke="#111"/></svg></button></div>
    <button class="arrow down" aria-label="向下"></button>
    <button class="expand" aria-label="展开"><svg viewBox="0 0 12 12"><path d="M2 1v10" stroke="#111" stroke-width="2"/><path d="M10 1v10L4 6z" fill="#111"/></svg></button>
  </aside>
</main>

<footer class="status">
  <div class="hint"><span class="coords">( 60.060, 170.738 )</span><span>接着单击可进行拖动或缩放；再单击可旋转或倾斜；双击工具，可选择所有对象；按住 Shift 键单击可选择多个对象；按住 Alt 键单击…</span></div>
  <div class="object">
    <svg><use href="#bucket"/></svg><svg viewBox="0 0 18 18"><path d="M.5.500h17v17H.5zM1 1l16 16M17 1L1 17" fill="#fff" stroke="#222"/></svg>
    <svg><use href="#nib"/></svg><svg viewBox="0 0 18 18"><path d="M.5.500h17v17H.5z" fill="#201c1a" stroke="#777"/></svg>
  </div>
</footer>

<div class="taskbar">
  <svg class="aurora" viewBox="0 0 1920 82" preserveAspectRatio="none"><path d="M0 80Q70 45 230 0M480 50q300 30 560-20" stroke-width="7" opacity=".08"/><path d="M700 82Q860 20 1060 6" stroke-width="12" opacity=".1"/><path d="M1060 6q190-8 320 76" stroke-width="9" opacity=".12"/><path d="M1190 8q110 18 190 74" stroke-width="6" opacity=".24"/><path d="M150 82q40-30 48-50" stroke="#bde08a" stroke-width="4" opacity=".22"/></svg>
  <button class="start" aria-label="开始"><svg viewBox="0 0 20 20"><path d="M2 4q4-3 7-1L8 9Q5 7 1 9z" fill="#ef6432"/><path d="M10 4q4 2 8-1l-1 6q-4 3-8 1z" fill="#8cc541"/><path d="M1 11q4-2 7 0l-1 6q-4-2-7 0z" fill="#49b3ef"/><path d="M9 12q4 2 8-1l-1 6q-4 3-8 1z" fill="#fcd13b"/></svg></button>
  <div class="tasks">
    <button class="active"><svg><use href="#corel"/></svg><span>CorelDRAW X4 (...</span></button>
    <button class="tight"><svg viewBox="0 0 32 34"><circle cx="16" cy="16" r="15" fill="#f9e3be"/><circle cx="14" cy="13" r="10" fill="#fff" stroke="#ef7a1d" stroke-width="5"/><circle cx="14" cy="13" r="6" fill="#fff" stroke="#d22a19" stroke-width="2"/><path d="M14 9v6M10 13h8" stroke="#c22619"/><path d="M18 24q0-5 4-4 5-3 7 5" fill="#fff" stroke="#f19129" stroke-width="2"/><path d="M6 26h20v6q-10 4-20 0z" fill="#fff"/><path d="M9 27v4M12 28h3v3M19 27v4M23 27v4" stroke="#555"/></svg><span>宏达印刷-白霄</span></button>
    <button class="roomy"><svg viewBox="0 0 30 34"><path d="M14 4l9 3v21l-9 4z" fill="#d7b353"/><path d="M4 3l10 3v26L4 28z" fill="#f8e6a0"/><path d="M14 5l4-1v24l-4 4z" fill="#f3d67b"/><path d="M19 20l6 1v9l-9 2z" fill="#f2e3ae"/></svg><span>G:\小精灵</span></button>
    <button class="tight"><svg><use href="#seal"/></svg><span>印前小精灵VIP2....</span></button>
  </div>
  <svg class="keyboard" viewBox="0 0 16 14"><path d="M1 6h14v7H1z" fill="#e8ecef" stroke="#aebdca"/><path d="M3 8h10M3 10h10" stroke="#667" stroke-dasharray="1 1"/><path d="M8 6q-3-4 5-5" fill="none" stroke="#8ba5bb"/></svg>
  <div class="cpu">3%<br>CPU占用</div>
  <div class="tray">
    <svg viewBox="0 0 16 16"><ellipse cx="8" cy="9" rx="6" ry="6" fill="#111"/><circle cx="8" cy="5" r="5" fill="#111"/><ellipse cx="8" cy="11" rx="4" ry="4" fill="#fff"/><path d="M3 8q5 3 10 0v2q-5 3-10 0z" fill="#e22420"/><circle cx="6" cy="4" r="1" fill="#fff"/><circle cx="10" cy="4" r="1" fill="#fff"/><path d="M5 6h6L8 8zM2 14h5v2H2zM9 14h5v2H9z" fill="#f5a623"/></svg>
    <svg viewBox="0 0 16 16"><circle cx="10" cy="6" r="4" fill="none" stroke="#f28a1d" stroke-width="3"/><path d="M7 9l-6 6" stroke="#f28a1d" stroke-width="3"/></svg>
    <svg viewBox="0 0 16 16"><path d="M2 0h4v3h1v10H1V3h1z" fill="#b9c5ce" stroke="#6f8592"/><circle cx="11" cy="11" r="5" fill="#28a544"/><path d="M8 11l2 2 4-4" fill="none" stroke="#fff" stroke-width="2"/></svg>
    <svg viewBox="0 0 16 16"><path d="M0 0h16v16H0z" fill="#17251f"/><path d="M2 8q5-6 11-4v8q-7 2-11-4z" fill="none" stroke="#7fb83a"/><path d="M5 8q3-4 6 0-3 4-6 0z" fill="none" stroke="#7fb83a"/><circle cx="8" cy="8" r="1" fill="#7fb83a"/></svg>
    <svg viewBox="0 0 16 16"><path d="M1 6h3l6-5v14l-6-5H1z" fill="#dd5a49" stroke="#eee"/><path d="M12 4q3 4 0 8" fill="none" stroke="#903d49"/></svg>
    <svg viewBox="0 0 16 16"><path d="M1 6h2l5-4v12l-5-4H1z" fill="#fff"/><path d="M10 5q2 3 0 6M12 3q4 5 0 10" fill="none" stroke="#fff"/></svg>
    <svg viewBox="0 0 16 16"><path d="M6 3h10v8H6zM8 14h7M11 11v3M1 1v4h4V1M3 5v8h3" fill="none" stroke="#fff" stroke-width="2"/></svg>
  </div>
  <time class="clock"><span>14:33</span><span>星期四</span><span>2023/8/10</span></time>
  <button class="showdesktop" aria-label="显示桌面"></button>
  <div class="community"><svg viewBox="0 0 36 32"><path d="M1 2q12 2 11 13-2 11-9 14h6M35 2Q23 4 24 15q2 11 9 14h-6M11 13h14M15 30V19h6v11" fill="none" stroke="#b9324a" stroke-width="3"/></svg><div><strong>華印社區</strong><span>www.52cnp.com</span></div></div>
</div>
<script src="app.js"></script>
</body>
</html>
```
FILE: styles.css
```css
* { box-sizing: border-box; }
body {
  margin: 0;
  height: 100vh;
  display: flex;
  flex-direction: column;
  overflow: hidden;
  background: #f0f0f0;
  color: #111;
  font: 12px/16px "Noto Sans", "Noto Sans CJK SC", sans-serif;
}
button, input, select { font: inherit; color: inherit; margin: 0; padding: 0; border: 0; background: none; }
svg { display: block; flex: none; }
.defs { position: absolute; width: 0; height: 0; }
.defs .sealmark { font: italic 700 28px "Noto Sans CJK SC", sans-serif; fill: #fff; stroke: none; }

/* Title bar */
.titlebar {
  flex: none;
  height: 23px;
  display: flex;
  align-items: flex-start;
  overflow: hidden;
  border-bottom: 2px solid #0d2138;
  box-shadow: inset 0 -1px #8fb0d2;
  background:
    radial-gradient(ellipse 150px 26px at 110px 12px, #b6c4d6, rgba(182, 196, 214, .7) 50%, transparent),
    radial-gradient(ellipse 90px 40px at 100% 0, #a9bfd6, transparent),
    linear-gradient(90deg, #3f6eaa, #1b5090 20%, #1c5892 55%, #1a4777 80%, #1b4674);
}
.titlebar h1 { flex: 1; margin: 0 0 0 5px; font-size: 13px; line-height: 21px; font-weight: 400; color: #101820; white-space: pre; }
.logo { width: 16px; height: 18px; background: #79b936; }
.wincontrols { display: flex; height: 18px; margin-right: 3px; border: 1px solid #dbe5ef; border-top: 0; border-radius: 0 0 5px 5px; overflow: hidden; }
.wincontrols button { width: 27px; display: grid; place-items: center; border-right: 1px solid #dbe5ef; background: linear-gradient(#9fb2c6, #7089a4 45%, #3b5877 50%, #6a87a3); }
.wincontrols .close { width: 47px; border: 0; background: linear-gradient(#e2a092, #cf5f4c 45%, #b52d1c 50%, #d2604d); }
.wincontrols svg { width: 14px; height: 12px; }

/* Menu bar */
.menubar {
  flex: none;
  height: 26px;
  display: flex;
  align-items: center;
  gap: 21px;
  padding: 0 8px 0 3px;
  color: #f2f2f2;
  background: linear-gradient(#b8b8b4, #747472 4px, #3a3a3a 10px, #181818 12px);
}
.docicon { width: 12px; height: 16px; background: #f2f5e8; }
.menubar button { white-space: nowrap; }
.doccontrols { width: 46px; height: 12px; margin-left: auto; margin-bottom: 5px; }

/* Toolbars */
.toolbar { flex: none; display: flex; align-items: center; border-bottom: 1px solid #c4c4c4; background: linear-gradient(#fff, #efefef 10px); }
.standard { height: 30px; padding-left: 3px; }
.property { height: 39px; padding-left: 3px; }
.grip { flex: none; width: 3px; height: 20px; margin-right: 3px; background: repeating-linear-gradient(#bbb 0 2px, transparent 2px 4px); }
.property .grip { margin: 0 4px 0 2px; height: 28px; }
.standard .grip.late { margin: 0 8px; }
.sep { flex: none; width: 9px; height: 28px; background: linear-gradient(#bcbcbc, #bcbcbc) center / 1px 100% no-repeat; }
.tool { flex: none; width: 26px; height: 26px; display: grid; place-items: center; position: relative; }
.tool svg { width: 18px; height: 18px; fill: none; stroke: #5c5e74; stroke-width: 1; }
.tool.off svg { stroke: #b4b4b4; }
.tool.dim svg { opacity: .4; }
.tool.on { width: 24px; height: 24px; margin: 1px; border: 1px solid #666; border-radius: 3px; background: linear-gradient(#c6c6c6, #e4e4e4); box-shadow: inset 1px 1px 2px #999; }
.tool.fly::after { content: ""; position: absolute; right: 1px; bottom: 3px; border: 3px solid; border-color: transparent #111 #111 transparent; }
.tool text { font-size: 7px; fill: #777; stroke: none; }
.tool text.light { fill: #fff; font-size: 9px; }
.tool.blue svg { stroke: #1267b8; width: 16px; height: 16px; }
.flip svg { transform: scaleX(-1); }
.drop { width: 15px; height: 20px; display: grid; place-items: center; }
.drop::after { content: ""; border: 3px solid transparent; border-top: 4px solid #111; border-bottom: 0; }
.drop.off::after { border-top-color: #999; }
.combo { position: relative; display: block; height: 22px; }
.combo select { appearance: none; width: 100%; height: 100%; padding: 0 4px; border: 1px solid #bbb; background: #fff; line-height: 20px; }
.combo.raised select { border: 1px solid #7d7d7d; border-radius: 3px; background: linear-gradient(#f6f6f6, #e3e3e3 50%, #d0d0d0); }
.combo::after { content: ""; position: absolute; right: 4px; top: 9px; border: 4px solid transparent; border-top: 5px solid #111; border-bottom: 0; pointer-events: none; }
.zoomlevel { width: 84px; margin-right: 4px; }
.zoomlevel select, .paper select { font-size: 11px; }
.texttool { position: relative; display: flex; align-items: center; gap: 4px; padding: 3px 17px 3px 2px; white-space: nowrap; }
.texttool svg { width: 16px; height: 16px; }
.texttool::after { content: ""; position: absolute; right: 4px; bottom: 0; border: 2px solid; border-color: transparent #111 #111 transparent; }
.paper { width: 161px; margin: 0 5px 0 2px; }
.pair { display: grid; gap: 1px; margin-right: 6px; }
.pair label, .nudge { display: flex; align-items: center; height: 16px; }
.pair label svg { width: 14px; height: 14px; margin-right: 2px; }
.pair input { width: 75px; height: 15px; padding: 0 3px; background: #fff; font-size: 10px; }
.spin { display: flex; gap: 1px; }
.spin button { width: 9px; height: 13px; border: 1px solid #b4b8c4; font-size: 8px; line-height: 10px; color: #445; overflow: hidden; }
.spin.tall { display: grid; gap: 0; }
.spin.tall button { width: 16px; height: 10px; line-height: 8px; }
.units { display: flex; align-items: center; gap: 4px; margin: 0 3px 0 5px; white-space: nowrap; }
.units .combo { width: 92px; }
.nudge { margin: 0 6px 0 5px; }
.nudge svg { width: 16px; height: 16px; margin-right: 2px; }
.nudge input { width: 55px; height: 20px; padding: 0 3px; background: #fff; font-size: 10px; }
.dup { margin: 0 8px 0 5px; }
.wide { margin-left: 5px; }
.plugins { display: flex; opacity: .75; }

/* Workspace */
.workspace { flex: 1; min-height: 0; display: flex; }
.toolbox { flex: none; width: 30px; display: flex; flex-direction: column; align-items: center; border-right: 1px solid #c4c4c4; background: linear-gradient(90deg, #fff, #efefef 10px); }
.vgrip { flex: none; width: 18px; height: 10px; background: repeating-linear-gradient(90deg, #bbb 0 2px, transparent 2px 4px) 0 4px / 100% 2px no-repeat; }
.second .vgrip { height: 14px; background-position: 0 7px; }
.hsep { flex: none; width: 20px; height: 9px; background: linear-gradient(#bbb, #bbb) center / 100% 1px no-repeat; }
.brand { height: 26px; color: #12125f; font: 700 7px/7px "Liberation Mono", monospace; text-decoration: none; padding-top: 3px; }
.glyph { font: 500 16px/26px "Noto Sans CJK SC", sans-serif; color: #555770; }
.wen { color: #e55b12; font-weight: 700; text-shadow: 0 0 1px #ffd400; font-size: 15px; }
.zi { color: #5c5300; font-weight: 700; font-size: 15px; text-shadow: 0 0 1px #fe0, 1px 1px 1px #fe0, -1px -1px 1px #fe0; }
.ps { font-weight: 600; color: #41425e; }
.tool.green svg { fill: #2c7a3b; }
.tool.navy svg { fill: #1a1ac4; }
.tool.plum svg { fill: #8c2a82; }
.tool.leaf svg { fill: #2f9b36; }
.editor { flex: 1; min-width: 0; display: grid; grid-template: 20px minmax(0, 1fr) 18px / 20px minmax(0, 1fr) 18px; }
.corner { display: grid; place-items: center; }
.corner svg { width: 12px; height: 12px; }
.ruler { width: 100%; height: 100%; font-size: 9px; overflow: hidden; }
.ruler text { fill: #222; }
.horizontal { grid-column: 2 / 4; border-bottom: 1px solid #8c8c8c; }
.vertical { grid-row: 2 / 4; border-right: 1px solid #8c8c8c; }
.canvas { position: relative; overflow: hidden; background: #fff; }
.page { position: absolute; left: 674px; top: 78px; width: 455px; height: 643px; border: 1px solid #9a9a9a; background: #fff; box-shadow: 5px 5px #b0b0b0; }
.scroll { display: flex; background: #ececec; }
.vscroll { flex-direction: column; padding: 2px 0 0 2px; }
.track { flex: 1; padding-top: 172px; }
.thumb { display: grid; place-items: center; border: 1px solid #8f8f8f; }
.thumb::after { content: ""; width: 6px; height: 7px; background: repeating-linear-gradient(#555 0 1px, transparent 1px 3px); }
.vscroll .thumb { height: 70%; background: linear-gradient(90deg, #fafafa, #dcdcdc 50%, #c4c4c4); }
.arrow { flex: none; width: 16px; height: 16px; display: grid; place-items: center; }
.arrow::after { content: ""; border: 3px solid transparent; }
.up::after { border-bottom: 4px solid #222; border-top: 0; }
.down::after { border-top: 4px solid #222; border-bottom: 0; }
.left::after { border-right: 4px solid #222; border-left: 0; }
.right::after { border-left: 4px solid #222; border-right: 0; }
.pale::after { border-bottom-color: #999; }
.bottombar { display: flex; border-top: 1px solid #8c8c8c; background: #efefef; }
.pages { flex: 1; display: flex; align-items: center; }
.bottombar > .grip { height: 14px; margin: 2px; }
.pages button { width: 17px; height: 16px; display: grid; place-items: center; }
.pages svg { width: 11px; height: 13px; }
.count { width: 63px; text-align: center; }
.pages .tab { width: 55px; margin-left: 1px; padding-right: 4px; background: linear-gradient(#c9e9fc, #8ccdf4); clip-path: polygon(0 0, 48px 0, 100% 6px, 100% 100%, 0 100%); }
.hscroll { width: 49.5%; border-left: 1px solid #8c8c8c; }
.hscroll .thumb { flex: 1; height: 15px; margin: 0 3px; border-radius: 2px; background: linear-gradient(#f8f8f8, #dedede 50%, #c6c6c6); }
.hscroll .thumb::after { width: 8px; height: 5px; background: repeating-linear-gradient(90deg, #555 0 1px, transparent 1px 3px); }
.navigator { display: grid; place-items: center; }
.navigator svg { width: 14px; height: 14px; }
.palette { flex: none; width: 22px; display: flex; flex-direction: column; align-items: center; background: #f4f4f4; border-left: 1px solid #fff; }
.palette .vgrip { width: 11px; }
.play { width: 14px; height: 16px; display: grid; place-items: center; border: 1px solid #aaa; border-radius: 7px; background: #fff; }
.play::after { content: ""; border: 3px solid transparent; border-left: 5px solid #111; border-right: 0; }
.palette .up { height: 18px; }
.swatches { display: grid; width: 18px; border: 1px solid #66686a; border-top: 0; }
.swatches button { height: 17px; border-bottom: 1px solid #555; }
.swatches svg { width: 16px; height: 16px; }
.expand { height: 17px; }
.expand svg { width: 12px; height: 12px; }

/* Status bar */
.status { flex: none; height: 45px; display: flex; justify-content: space-between; background: linear-gradient(#fff, #efefef 12px); }
.hint { display: flex; align-items: flex-end; padding: 0 0 4px 5px; white-space: nowrap; }
.coords { width: 115px; font-size: 11px; }
.object { display: grid; grid-template-columns: 22px 18px; gap: 2px 0; align-content: start; padding-top: 4px; margin-right: 166px; }
.object svg { width: 17px; height: 18px; }

/* Taskbar */
.taskbar {
  flex: none;
  position: relative;
  height: 82px;
  display: flex;
  align-items: flex-start;
  border-top: 1px solid #10273c;
  box-shadow: inset 0 1px #80aac8;
  color: #fff;
  background: linear-gradient(90deg, #1c5f96, #2878a3 8%, #3a87a9 22%, #2876a2 35%, #1f6399 52%, #185490 72%, #14447a 85%, #123f73);
}
.taskbar > * { position: relative; }
.taskbar .aurora { position: absolute; inset: 0; width: 100%; height: 100%; fill: none; stroke: #fff; filter: blur(2px); }
.start { width: 36px; height: 36px; margin: 22px 15px 0 9px; display: grid; place-items: center; border: 1px solid #adc8da; border-radius: 18px; background: radial-gradient(circle at 50% 100%, #35c5f1, #1c5b8b 50%, #173d60 60%, #9db8c8); }
.start svg { width: 22px; height: 22px; }
.tasks { display: flex; gap: 4px; flex: 1; }
.tasks button { width: 158px; height: 38px; display: flex; align-items: center; gap: 8px; padding: 0 8px; border: 1px solid #b6d2e2; border-radius: 3px; box-shadow: 0 0 0 1px #1e4e6e; background: linear-gradient(165deg, rgba(255,255,255,.55), rgba(255,255,255,.15) 40%, rgba(255,255,255,.2)); text-shadow: 0 0 2px #234; white-space: nowrap; }
.tasks .active { background: linear-gradient(165deg, rgba(255,255,255,.75), rgba(255,255,255,.4) 50%, rgba(255,255,255,.5)); }
.tasks svg { width: 30px; height: 32px; }
.tasks .tight { gap: 5px; }
.tasks .roomy { gap: 7px; }
.keyboard { width: 16px; height: 14px; margin: 5px 18px 0 0; }
.cpu { width: 48px; margin: 23px 12px 0 0; text-align: center; line-height: 17px; white-space: nowrap; }
.tray { display: grid; grid-template-columns: repeat(4, 16px); gap: 24px 8px; margin: 13px 14px 0 0; }
.tray svg { width: 16px; height: 16px; }
.clock { width: 66px; display: grid; row-gap: 9px; text-align: center; margin: 8px 5px 0 0; }
.showdesktop { width: 14px; height: 81px; border-left: 1px solid #0e2c50; background: linear-gradient(#9db4cc, #3a6290 20%, #28568a); }
.taskbar .community { position: absolute; right: 3px; bottom: 1px; display: flex; gap: 3px; opacity: .9; }
.community svg { width: 36px; height: 34px; }
.community div { display: grid; justify-items: center; }
.community strong { font: 700 21px/22px "Noto Sans CJK TC", sans-serif; color: #be8d57; }
.community span { font: 700 11px/12px "Liberation Sans", sans-serif; color: #173b66; text-shadow: 0 0 1px #fff, 1px 0 1px #fff, -1px 0 1px #fff; }
```
FILE: app.js
```js
const SVG = "http://www.w3.org/2000/svg";
const STEP = 108; // distance between two labelled marks, 50 mm apart

function label(ruler, value, attributes) {
  const text = document.createElementNS(SVG, "text");
  for (const name in attributes) text.setAttribute(name, attributes[name]);
  text.setAttribute("text-anchor", "middle");
  text.textContent = Math.abs(value);
  ruler.append(text);
}

const hruler = document.getElementById("hruler");
for (let mark = -6; mark <= 10; mark++) {
  label(hruler, mark * 50, { x: 675 + mark * STEP, y: 11 });
}

const vruler = document.getElementById("vruler");
for (let mark = 0; mark <= 6; mark++) {
  label(vruler, mark * 50, { transform: `translate(14 ${720 - mark * STEP}) rotate(-90)` });
}

const colours = `1e1d19 2e2d2a 42413e 555452 696866 7f7e7c 929190 a9a8a6 bfbebb dcdbd8 ffffff
340f7a 0b8ce6 00923f ffff00 e83f00 ee2d7a a34a7c f08300 ff9a94 756a60 b9acd6 9583b8 6377b9
7357a0 7c6e96 475a80 544c5f 5d6c85 0077cc 60c0f8 8ca9ba 718893 546670 414245 42605f 256f64
567b7b 1f8f82 24925f 00b0d0 2092a0 8fb0a2`.split(/\s+/);
const swatches = document.getElementById("swatches");
for (const colour of colours) {
  const button = document.createElement("button");
  button.style.background = "#" + colour;
  button.setAttribute("aria-label", "#" + colour);
  swatches.append(button);
}
```
